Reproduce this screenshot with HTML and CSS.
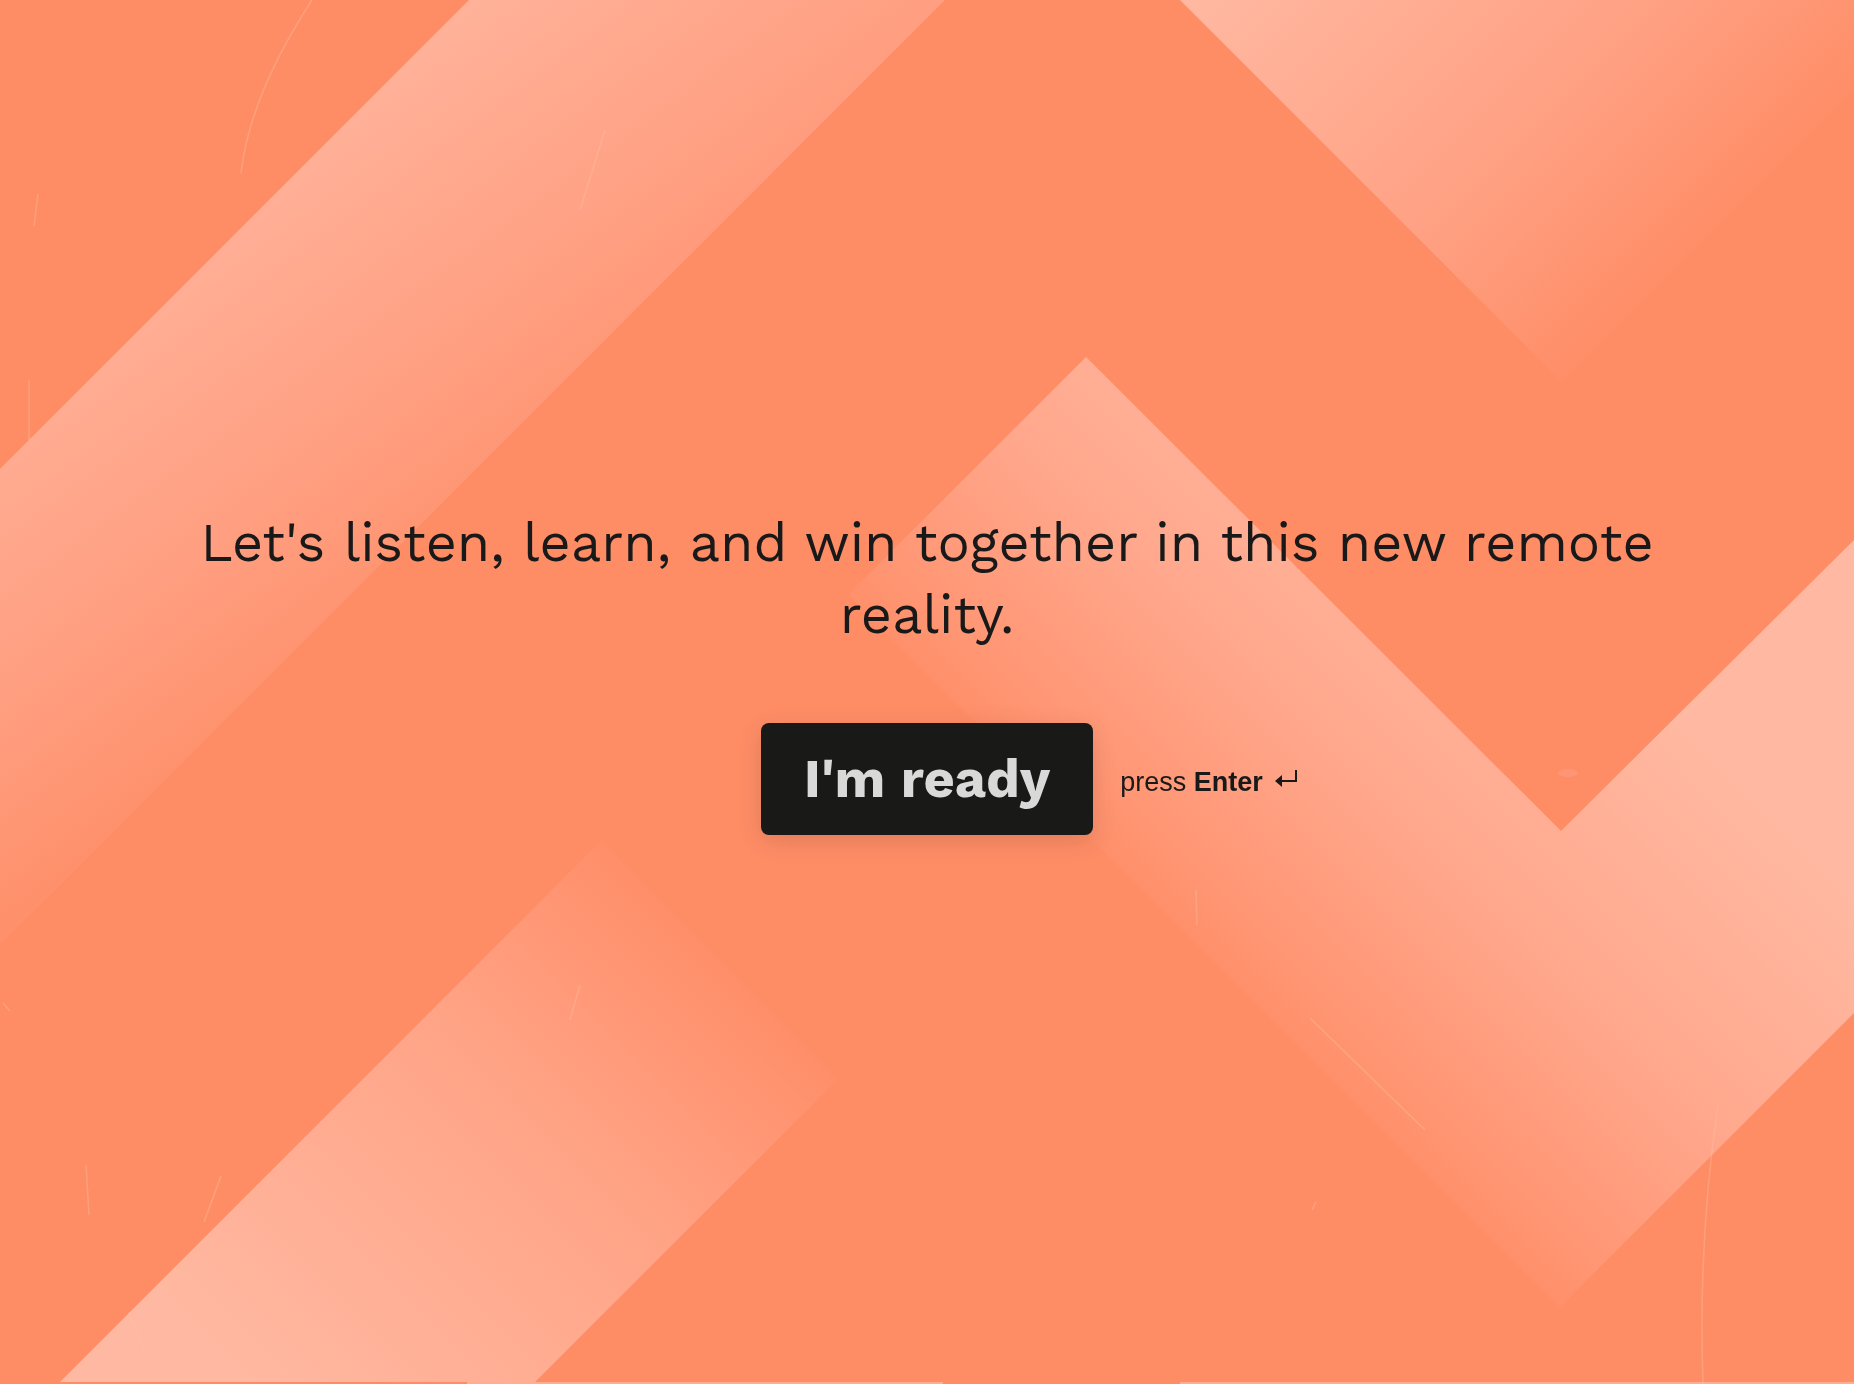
FILE: index.html
```html
<!DOCTYPE html>
<html lang="en">
<head>
    <meta charset="UTF-8">
    <meta name="viewport" content="width=device-width, initial-scale=1.0">
    <title>Let's listen, learn, and win together</title>
    <link rel="stylesheet" href="styles.css">
</head>
<body>
    <svg class="backdrop" viewBox="0 0 1854 1384" preserveAspectRatio="xMidYMid slice" aria-hidden="true">
        <defs>
            <linearGradient id="fade-left" gradientUnits="userSpaceOnUse" x1="142" y1="185" x2="474" y2="631">
                <stop offset="0" stop-color="#ffb59e"/>
                <stop offset="0.6" stop-color="#ff9e80"/>
                <stop offset="1" stop-color="#fe8d66"/>
            </linearGradient>
            <linearGradient id="fade-top" gradientUnits="userSpaceOnUse" x1="1180" y1="0" x2="1570" y2="390">
                <stop offset="0" stop-color="#ffb9a2"/>
                <stop offset="0.6" stop-color="#ffa184"/>
                <stop offset="1" stop-color="#fe8d66"/>
            </linearGradient>
            <linearGradient id="fade-right" gradientUnits="userSpaceOnUse" x1="1397" y1="429" x2="1022" y2="804">
                <stop offset="0" stop-color="#ffb9a2"/>
                <stop offset="0.5" stop-color="#ffa88d"/>
                <stop offset="0.85" stop-color="#ff9674"/>
                <stop offset="1" stop-color="#fe8d66"/>
            </linearGradient>
            <linearGradient id="fade-bottom" gradientUnits="userSpaceOnUse" x1="125" y1="1275" x2="592" y2="808">
                <stop offset="0" stop-color="#ffb9a2"/>
                <stop offset="0.6" stop-color="#ffa487"/>
                <stop offset="0.9" stop-color="#ff9370"/>
                <stop offset="1" stop-color="#fe8d66"/>
            </linearGradient>
        </defs>
        <rect width="1854" height="1384" fill="#fe8d66"/>
        <path fill="url(#fade-left)" d="M469 0H945L0 945V469Z"/>
        <path fill="url(#fade-top)" d="M1180 0H1854V90L1561 381Z"/>
        <path fill="url(#fade-right)" d="M1086 357L1561 831L1854 540V1013L1560 1307L848 595Z"/>
        <path fill="url(#fade-bottom)" d="M60 1382L601 841L838 1079L535 1382Z"/>
        <!-- the pattern starts over at the bottom edge -->
        <path fill="#ffae94" d="M467 1382H943V1384H467ZM1180 1382H1854V1384H1180Z"/>
        <!-- scratches -->
        <g class="scratches">
            <path d="M312 0Q250 95 241 173"/>
            <path d="M38 194L34 226"/>
            <path d="M29 380V440"/>
            <path d="M605 130L580 210"/>
            <path d="M1718 1105Q1698 1240 1703 1384"/>
            <path d="M1310 1018L1425 1130"/>
            <path d="M1196 890L1197 925"/>
            <path d="M580 985L570 1020"/>
            <path d="M86 1165L89 1215"/>
            <path d="M221 1176L204 1222"/>
            <path d="M129 1312L145 1352"/>
            <path d="M1312 1210L1316 1202"/>
            <path d="M3 1003L10 1011"/>
        </g>
        <ellipse cx="1568" cy="773" rx="10" ry="4" fill="#ff9e84" opacity=".5"/>
    </svg>

    <main class="welcome">
        <h1 class="title">Let's listen, learn, and win together in this new remote reality.</h1>
        <div class="actions">
            <button type="button" class="start" aria-describedby="hint">I'm ready</button>
            <div class="hint" id="hint">
                <span>press <strong>Enter</strong></span>
                <svg class="enter-icon" viewBox="0 0 22 18" aria-hidden="true">
                    <path d="M21 1V12H6" fill="none" stroke="currentColor" stroke-width="2"/>
                    <path d="M0 12L7 6V18Z" fill="currentColor"/>
                </svg>
            </div>
        </div>
    </main>

    <script>
        document.addEventListener('keydown', function(event) {
            if (event.key === 'Enter') {
                document.querySelector('.start').focus();
            }
        });
    </script>
</body>
</html>
```
FILE: styles.css
```css
* {
    box-sizing: border-box;
}
body {
    margin: 0;
    background-color: #fe8d66;
    color: #191919;
    font-family: 'Work Sans', Inter, sans-serif;
}
.backdrop {
    position: fixed;
    top: 0;
    left: 0;
    width: 100%;
    height: 100%;
    z-index: -1;
}
.scratches {
    fill: none;
    stroke: #ffc2a6;
    stroke-width: 1.5;
    opacity: 0.35;
}
.welcome {
    display: flex;
    flex-direction: column;
    justify-content: center;
    gap: 72px;
    min-height: 100vh;
    padding: 0 10% 42px;
}
.title {
    margin: 0;
    font-size: 54px;
    line-height: 72px;
    font-weight: 400;
    text-align: center;
}
.actions {
    display: grid;
    grid-template-columns: 1fr auto 1fr;
    align-items: center;
    gap: 27px;
}
.start {
    grid-column: 2;
    padding: 20px 43px;
    border: none;
    border-radius: 8px;
    background-color: #191a18;
    color: #d9d9d9;
    font-family: inherit;
    font-size: 54px;
    line-height: 72px;
    font-weight: 700;
    box-shadow: 0 6px 24px rgba(0, 0, 0, 0.12);
    cursor: pointer;
}
.start:hover {
    background-color: #333;
}
.hint {
    display: flex;
    align-items: center;
    gap: 12px;
    padding-top: 6px;
    font-family: 'Liberation Sans', Arial, sans-serif;
    font-size: 27px;
    line-height: 32px;
    white-space: nowrap;
}
.enter-icon {
    width: 22px;
    height: 18px;
    margin-bottom: 8px;
}
@media (max-width: 900px) {
    .title, .start {
        font-size: 32px;
        line-height: 44px;
    }
    .hint {
        display: none;
    }
}
```
